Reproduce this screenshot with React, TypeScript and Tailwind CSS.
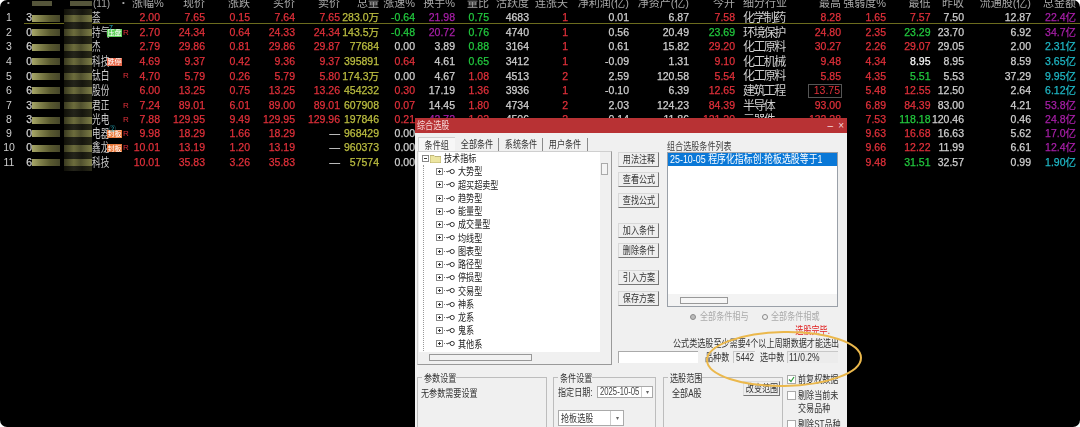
import React from "react";

const colors: Record<string, string> = {
  r: "text-[#e0303a]",
  y: "text-[#bcbe40]",
  g: "text-[#22c83e]",
  w: "text-[#cfcfcf]",
  p: "text-[#a81fa8]",
  c: "text-[#1fb6c4]",
  m: "text-[#c040d0]",
  b: "text-[#f4f4f4]",
};

const rows = [
  { n: "1", code: "3", name: "荟", cells: ["r2.00", "r7.65", "r0.15", "r7.64", "r7.65", "y283.0万", "g-0.64", "p21.98", "g0.75", "w4683", "r1", "w0.01", "w6.87", "r7.58", "w化学制药", "r8.28", "r1.65", "r7.57", "w7.50", "w12.87", "p22.4亿"] },
  { n: "2", code: "0", name: "持气", badge: "压盘", badgeColor: "bg-[#5fd05a]", r: true, sup: "7", cells: ["r2.70", "r24.34", "r0.64", "r24.33", "r24.34", "y143.5万", "g-0.48", "p20.72", "g0.76", "w4740", "r1", "w0.56", "w20.49", "g23.69", "w环境保护", "r24.80", "r2.35", "g23.29", "w23.70", "w6.92", "p34.7亿"] },
  { n: "3", code: "6", name: "杰", cells: ["r2.79", "r29.86", "r0.81", "r29.86", "r29.87", "y77684", "w0.00", "w3.89", "g0.88", "w3164", "r1", "w0.61", "w15.82", "r29.20", "w化工原料", "r30.27", "r2.26", "r29.07", "w29.05", "w2.00", "c2.31亿"] },
  { n: "4", code: "0", name: "科技", badge: "跌停", badgeColor: "bg-[#e8694a]", cells: ["r4.69", "r9.37", "r0.42", "r9.36", "r9.37", "y395891", "r0.64", "w4.61", "g0.65", "w3412", "r1", "w-0.09", "w1.31", "r9.10", "w化工机械", "r9.48", "r4.34", "b8.95", "w8.95", "w8.59", "c3.65亿"] },
  { n: "5", code: "0", name: "钛白", r: true, cells: ["r4.70", "r5.79", "r0.26", "r5.79", "r5.80", "y174.3万", "w0.00", "w4.67", "r1.08", "w4513", "r2", "w2.59", "w120.58", "r5.54", "w化工原料", "r5.85", "r4.35", "g5.51", "w5.53", "w37.29", "c9.95亿"] },
  { n: "6", code: "6", name: "股份", cells: ["r6.00", "r13.25", "r0.75", "r13.25", "r13.26", "y454232", "r0.30", "w17.19", "r1.36", "w3936", "r1", "w-0.10", "w6.39", "r12.65", "w建筑工程", "x13.75", "r5.48", "r12.55", "w12.50", "w2.64", "c6.12亿"] },
  { n: "7", code: "3", name: "君正", r: true, cells: ["r7.24", "r89.01", "r6.01", "r89.00", "r89.01", "y607908", "r0.07", "w14.45", "r1.80", "w4734", "r2", "w2.03", "w124.23", "r84.39", "w半导体", "r93.00", "r6.89", "r84.39", "w83.00", "w4.21", "p53.8亿"] },
  { n: "8", code: "3", name: "光电", r: true, cells: ["r7.88", "r129.95", "r9.49", "r129.95", "r129.96", "y197846", "r0.21", "p42.72", "r1.02", "w4506", "r2", "w0.14", "w11.86", "r121.20", "w元器件", "r132.28", "r7.53", "g118.18", "w120.46", "w0.46", "p24.8亿"] },
  { n: "9", code: "0", name: "电器", badge: "封板", badgeColor: "bg-[#ea7a3c]", r: true, sup: "②", cells: ["r9.98", "r18.29", "r1.66", "r18.29", "w—", "y968429", "w0.00", "w", "w", "w", "w", "w", "w", "w", "w", "w", "r9.63", "r16.68", "w16.63", "w5.62", "p17.0亿"] },
  { n: "10", code: "0", name: "鑫龙", badge: "封板", badgeColor: "bg-[#ea7a3c]", r: true, cells: ["r10.01", "r13.19", "r1.20", "r13.19", "w—", "y960373", "w0.00", "w", "w", "w", "w", "w", "w", "w", "w", "w", "r9.66", "r12.22", "w11.99", "w6.61", "p12.4亿"] },
  { n: "11", code: "6", name: "科技", cells: ["r10.01", "r35.83", "r3.26", "r35.83", "w—", "y57574", "w0.00", "w", "w", "w", "w", "w", "w", "w", "w", "w", "r9.48", "g31.51", "w32.57", "w0.99", "c1.90亿"] },
];

const headers = ["涨幅%", "现价", "涨跌", "买价", "卖价", "总量", "涨速%", "换手%", "量比", "活跃度", "连涨天", "净利润(亿)", "净资产(亿)", "今开", "细分行业", "最高", "强弱度%", "最低", "昨收", "流通股(亿)", "总金额"];

const gridCols = "grid grid-cols-[18px_14px_100px_28px_45px_45px_45px_45px_39px_36px_40px_34px_40px_39px_61px_60px_46px_65px_41px_45px_44.5px_33.5px_67px_45px_4px] items-center";

function Mosaic() {
  return (
    <span className="flex h-full w-[60px] shrink-0 items-center gap-[4px]">
      <span className="h-[7px] w-[28px] bg-[linear-gradient(90deg,#a6a668,#80804a_30%,#5a5a30_65%,#46462a)]" />
      <span className="flex h-full w-[28px] items-center bg-[linear-gradient(90deg,#101008,#24241a_35%,#16160e_65%,#2a2a18)]">
        <span className="h-[7px] w-full bg-[linear-gradient(90deg,#3a3a20,#6c6c3c_35%,#50502e_60%,#7c7c46)]" />
      </span>
    </span>
  );
}

function Cell({ v, left }: { v: string; left?: boolean }) {
  const key = v.charAt(0);
  const text = v.slice(1);
  if (key === "x") {
    return (
      <span className="mr-[-1px] ml-auto flex h-[14px] w-[34px] items-center justify-end justify-self-end border border-[#555] pr-[1px] text-[#e0303a]">
        {text}
      </span>
    );
  }
  if (left) {
    return <span className={"pl-[8px] text-[12px] tracking-[-1.6px] whitespace-nowrap " + colors[key]}>{text}</span>;
  }
  return <span className={"text-right whitespace-nowrap [-webkit-text-stroke:0.25px] " + colors[key]}>{text}</span>;
}

function Table() {
  return (
    <div className="[font-family:'Liberation_Sans_Narrow','Liberation_Sans','Noto_Sans_CJK_SC',sans-serif] text-[10.5px]">
      <div className={gridCols + " h-[9px] overflow-hidden text-[#a8a8a8]"}>
        <span className="-mt-[5px] pl-[7px] text-[8px]">•</span>
        <span />
        <span className="-mt-[5px] flex items-center">
          <span className="h-[5px] w-[20px] bg-[#55553a]" />
          <span className="ml-[18px] h-[5px] w-[22px] bg-[#55553a]" />
          <span className="ml-[1px] text-[10px]">(11)</span>
          <span className="ml-[12px] text-[8px]">•</span>
        </span>
        {headers.map((h, i) => (
          <span key={h} className={"-mt-[5px] whitespace-nowrap text-[11px] " + (i === 14 ? "pl-[8px]" : "text-right")}>
            {h}
          </span>
        ))}
      </div>
      {rows.map((row, idx) => (
        <React.Fragment key={row.n}>
          <div className={gridCols + " h-[14.6px] " + (idx === 0 ? "-mb-px" : "")}>
            <span className="text-center text-[#cfcfcf]">{row.n}</span>
            <span className="text-right text-[#cfcfcf] [-webkit-text-stroke:0.25px]">{row.code}</span>
            <span className="flex h-full items-center">
              <Mosaic />
              <span className="flex w-[15px] shrink-0 items-center">
                <span className="inline-block origin-left scale-x-[.72] text-[12px] leading-none whitespace-nowrap text-[#cfcfcf]">{row.name}</span>
              </span>
              <span className="relative flex h-[7px] w-[15px] shrink-0 items-center justify-center">
                {row.sup && <span className="absolute -top-[6px] left-[2px] text-[7px] text-[#2ab6c8]">{row.sup}</span>}
                {row.badge && (
                  <span className={"flex h-[8px] w-[15px] items-center justify-center overflow-hidden text-[7px] leading-none text-white " + row.badgeColor}>{row.badge}</span>
                )}
              </span>
              {row.r && <span className="ml-[1px] text-[8px] text-[#e0303a]">R</span>}
            </span>
            {row.cells.map((c, i) => (
              <Cell key={i} v={c} left={i === 14} />
            ))}
          </div>
          {idx === 0 && <div className="ml-[24px] h-px bg-[#6c6c1e]" />}
        </React.Fragment>
      ))}
    </div>
  );
}

function T({ children, className = "", wide }: { children: React.ReactNode; className?: string; wide?: boolean }) {
  return (
    <span className={"inline-block whitespace-nowrap leading-none " + (wide ? "scale-x-[.81] " : "scale-x-[.77] ") + (className.includes("origin-") ? "" : "origin-left ") + className}>
      {children}
    </span>
  );
}

function Btn({ label, className = "" }: { label: string; className?: string }) {
  return (
    <div className={"flex h-[15px] w-[41px] items-center justify-center border border-t-[#d8d8d8] border-l-[#d8d8d8] border-r-[#777] border-b-[#777] bg-[#eeeeee] " + className}>
      <T className="origin-center text-[#333]">{label}</T>
    </div>
  );
}

function PlusBox() {
  return (
    <svg width="7" height="7" viewBox="0 0 7 7" className="shrink-0">
      <rect x="0.5" y="0.5" width="6" height="6" fill="#fff" stroke="#888" />
      <path d="M2 3.5h3M3.5 2v3" stroke="#333" />
    </svg>
  );
}

function Key() {
  return (
    <svg width="11" height="7" viewBox="0 0 11 7" className="ml-[1px] shrink-0">
      <path d="M0 3.5h3.5" stroke="#777" strokeDasharray="1 1" />
      <path d="M3 4l2-1h1" stroke="#333" fill="none" />
      <circle cx="8.2" cy="3.5" r="2.1" fill="#fff" stroke="#333" />
    </svg>
  );
}

const treeItems = ["大势型", "超买超卖型", "趋势型", "能量型", "成交量型", "均线型", "图表型", "路径型", "停损型", "交易型", "神系", "龙系", "鬼系", "其他系"];

function LeftPanel() {
  return (
    <div className="w-[195px] shrink-0">
      <div className="flex h-[14px] items-end pl-[1px] text-[#333]">
        <div className="flex h-[14px] w-[37px] items-center justify-center border-t border-l border-[#cfcfcf] bg-[#f7f7f7] pt-[2px]">
          <T className="origin-center">条件组</T>
        </div>
        {["全部条件", "系统条件", "用户条件"].map((t, i) => (
          <div key={t} className={"flex h-[13px] items-center justify-center border-r border-[#8a8a8a] " + (i === 2 ? "w-[45px]" : "w-[44px]")}>
            <T className="origin-center">{t}</T>
          </div>
        ))}
      </div>
      <div className="h-[214px] border border-t-[#cfcfcf] border-l-[#cfcfcf] border-r-[#9a9a9a] border-b-[#9a9a9a] pl-[1px]">
        <div className="flex h-[200px]">
          <div className="w-[181px] overflow-hidden bg-white pl-[3px] text-[#222]">
            <div className="flex h-[13px] items-center">
              <svg width="7" height="7" viewBox="0 0 7 7" className="shrink-0">
                <rect x="0.5" y="0.5" width="6" height="6" fill="#fff" stroke="#888" />
                <path d="M2 3.5h3" stroke="#333" />
              </svg>
              <svg width="11" height="9" viewBox="0 0 11 9" className="ml-[1px] shrink-0">
                <path d="M0 1.5h4l1 1h6v6.5H0z" fill="#ece5a0" stroke="#a89c58" strokeWidth="0.7" />
              </svg>
              <T className="ml-[3px]">技术指标</T>
            </div>
            <div className="ml-[1px] border-l border-dotted border-[#999] pl-[12px]">
              {treeItems.map((t) => (
                <div key={t} className="flex h-[13.25px] items-center">
                  <PlusBox />
                  <Key />
                  <T className="ml-[3px]">{t}</T>
                </div>
              ))}
            </div>
          </div>
          <div className="w-[10px] pt-[11px] pl-[1px]">
            <div className="h-[12px] w-[7px] border border-[#aaa] bg-[#f4f4f4]" />
          </div>
        </div>
        <div className="h-[12px] pt-[2px] pl-[10px]">
          <div className="h-[7px] w-[103px] border border-[#999] bg-[#f2f2f2]" />
        </div>
      </div>
    </div>
  );
}

function MiddleRight() {
  return (
    <div className="ml-[6px] w-[220px] shrink-0 pt-[4px]">
      <div className="flex">
        <div className="w-[41px] shrink-0 pt-[11px]">
          <Btn label="用法注释" />
          <Btn label="查看公式" className="mt-[5px]" />
          <Btn label="查找公式" className="mt-[6px]" />
          <Btn label="加入条件" className="mt-[15px]" />
          <Btn label="删除条件" className="mt-[5px]" />
          <Btn label="引入方案" className="mt-[12px]" />
          <Btn label="保存方案" className="mt-[6px]" />
        </div>
        <div className="ml-[8px] w-[171px] shrink-0">
          <div className="flex h-[11px] items-center">
            <T className="text-[#444]">组合选股条件列表</T>
          </div>
          <div className="flex h-[155px] flex-col border border-[#9aa0a8] bg-white">
            <div className="flex h-[13px] items-center bg-[#0a78d7] pl-[2px] text-white">
              <T wide className="text-[11px]">25-10-05 程序化指标创:抢板选股等于1</T>
            </div>
            <div className="flex-1" />
            <div className="flex h-[12px] items-center bg-[#f3f3f3] pl-[12px]">
              <div className="h-[7px] w-[48px] border border-[#999] bg-[#f6f6f6]" />
            </div>
          </div>
        </div>
      </div>
      <div className="mt-[3px] flex h-[13px] items-center pl-[72px] text-[#aaa]">
        <span className="h-[6px] w-[6px] rounded-full border border-[#888] bg-[#bbb]" />
        <T className="ml-[4px] w-[62px]">全部条件相与</T>
        <span className="h-[6px] w-[6px] rounded-full border border-[#888] bg-[#f0f0f0]" />
        <T className="ml-[3px]">全部条件相或</T>
      </div>
      <div className="mt-[1px] flex h-[13px] items-center justify-end pr-[8px]">
        <T className="origin-right text-[#e02020]">选股完毕.</T>
      </div>
      <div className="flex h-[13px] items-center pl-[55px]">
        <T className="text-[#333]">公式类选股至少需要4个以上周期数据才能选出</T>
      </div>
      <div className="mt-[1px] flex h-[12px] items-center text-[#333]">
        <div className="h-[12px] w-[80px] border-t border-l border-[#aaa] bg-white" />
        <T className="ml-[7px] w-[28px]">品种数</T>
        <span className="flex h-[12px] w-[22px] items-center border-t border-l border-[#c8c8c8] pl-[2px]">
          <T wide className="text-[10px]">5442</T>
        </span>
        <T className="ml-[5px] w-[27px]">选中数</T>
        <span className="flex h-[12px] w-[51px] items-center border-t border-l border-[#c8c8c8] bg-[#ececec] pl-[1px]">
          <T wide className="text-[10.5px]">11/0.2%</T>
        </span>
      </div>
    </div>
  );
}

function Group({ title, className, children }: { title: string; className: string; children: React.ReactNode }) {
  return (
    <fieldset className={"h-[70px] shrink-0 border border-[#bdbdbd] pl-[4px] " + className}>
      <legend className="h-[12px] px-[2px]">
        <T className="w-[30px] text-[#333]">{title}</T>
      </legend>
      {children}
    </fieldset>
  );
}

function Check({ checked, label, className = "" }: { checked?: boolean; label: string; className?: string }) {
  return (
    <div className={"flex h-[10px] items-center " + className}>
      <span className="flex h-[9px] w-[9px] shrink-0 items-center justify-center border border-[#aaa] bg-white">
        {checked && (
          <svg width="7" height="7" viewBox="0 0 7 7">
            <path d="M1 3.5l2 2 3-4.5" stroke="#2a9a3a" strokeWidth="1.2" fill="none" />
          </svg>
        )}
      </span>
      <T className="ml-[2px] text-[#333]">{label}</T>
    </div>
  );
}

function Bottom() {
  return (
    <div className="flex pl-[2px] text-[#333]">
      <Group title="参数设置" className="w-[130px]">
        <div className="mt-[3px] -ml-[1px]">
          <T>无参数需要设置</T>
        </div>
      </Group>
      <Group title="条件设置" className="ml-[6px] w-[103px]">
        <div className="mt-[3px] flex items-center">
          <T className="w-[39px]">指定日期:</T>
          <div className="flex h-[12px] w-[56px] items-center border border-[#aaa] bg-white pl-[2px] text-[#444]">
            <T className="w-[41px] text-[10px]">2025-10-05</T>
            <span className="ml-auto flex h-full w-[12px] items-center justify-center border-l border-[#ccc] text-[6px] text-[#666]">▾</span>
          </div>
        </div>
        <div className="mt-[12px] flex h-[16px] w-[66px] items-center border border-[#aaa] bg-white pl-[2px]">
          <T className="w-[50px]">抢板选股</T>
          <span className="ml-auto flex h-full w-[13px] items-center justify-center border-l border-[#ccc] text-[6px] text-[#666]">▾</span>
        </div>
      </Group>
      <Group title="选股范围" className="ml-[7px] w-[120px]">
        <div className="flex items-start">
          <div className="mt-[3px] w-[75px] pl-[4px]">
            <T>全部A股</T>
          </div>
          <div className="-mt-[2px] flex h-[15px] w-[37px] items-center justify-center border border-t-[#ddd] border-l-[#ddd] border-r-[#777] border-b-[#777] bg-[#eee]">
            <T className="origin-center">改变范围</T>
          </div>
        </div>
      </Group>
      <div className="ml-[4px] pt-[3px]">
        <Check checked label="前复权数据" />
        <Check label="剔除当前未" className="mt-[6px]" />
        <div className="mt-[1px] h-[10px] pl-[11px]">
          <T>交易品种</T>
        </div>
        <Check label="剔除ST品种" className="mt-[8px]" />
      </div>
    </div>
  );
}

export default function App() {
  return (
    <div className="h-[427px] w-[1080px] overflow-hidden bg-white">
      <div className="relative h-full w-full overflow-hidden rounded-[7px] bg-black blur-[0.45px] [font-family:'Liberation_Sans','Noto_Sans_CJK_SC',sans-serif]">
        <Table />
        <div className="absolute top-[118px] left-[415px] h-[309px] w-[432px] overflow-hidden bg-[#f0f0f0] text-[10.5px]">
          <div className="flex h-[15px] items-center justify-between bg-[#b83234] pr-[3px] pl-[2px] text-[#f6d8d8]">
            <T>综合选股</T>
            <span className="flex items-center gap-[5px] text-[10px] leading-none">
              <span>–</span>
              <span>×</span>
            </span>
          </div>
          <div className="flex h-[238px] pt-[4px] pl-[2px]">
            <LeftPanel />
            <MiddleRight />
          </div>
          <Bottom />
        </div>
        <svg className="absolute top-[328px] left-[703px]" width="162" height="62" viewBox="0 0 162 62">
          <ellipse cx="81" cy="31" rx="77" ry="27" fill="none" stroke="#ebb84c" strokeWidth="2" transform="rotate(-1 81 31)" />
        </svg>
      </div>
    </div>
  );
}
